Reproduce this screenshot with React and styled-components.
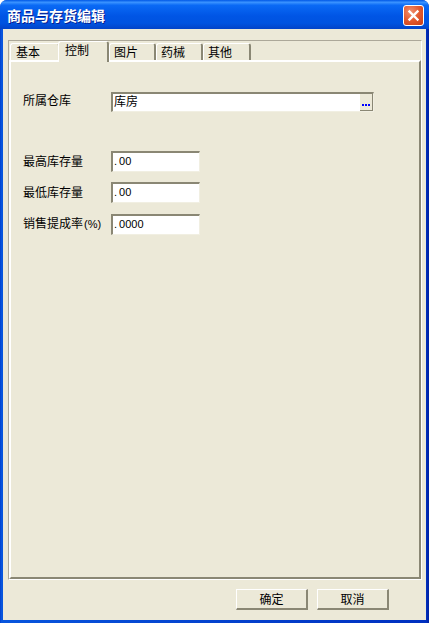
import React from 'react';
import styled, { createGlobalStyle } from 'styled-components';

const GlobalStyle = createGlobalStyle`
    html, body {
        margin: 0;
        padding: 0;
        background: #fff;
    }
    * {
        box-sizing: border-box;
    }
`;

const cjk = `"Noto Sans CJK SC", "Liberation Sans", sans-serif`;

const Window = styled.div`
    width: 429px;
    height: 623px;
    display: flex;
    flex-direction: column;
    font-family: ${cjk};
    font-size: 12px;
    line-height: 14px;
    color: #000;
    background: linear-gradient(90deg, #0038c8 0, #0855dd 1px, #0855dd 3px, #0030c0 426px, #0020a0 429px);
    border-radius: 7px 7px 0 0;
    overflow: hidden;
`;

const TitleBar = styled.div`
    height: 29px;
    flex: none;
    display: flex;
    justify-content: space-between;
    padding: 5px 5px 0 7px;
    background: linear-gradient(180deg, #0058e6 0%, #3a93ff 8%, #0a6af5 18%, #0055e5 55%, #0053e0 80%, #0243c8 100%);
`;

const Title = styled.div`
    color: #fff;
    font-size: 14px;
    font-weight: 700;
    line-height: 20px;
    text-shadow: 1px 1px 0 #0a1f8f;
`;

const CloseButton = styled.div`
    width: 21px;
    height: 21px;
    display: flex;
    align-items: center;
    justify-content: center;
    border: 1px solid #fff;
    border-radius: 3px;
    background: radial-gradient(circle at 35% 30%, #f09070 0%, #e2592f 50%, #c83c14 100%);
`;

const Frame = styled.div`
    flex: 1;
    display: flex;
    flex-direction: column;
    min-height: 0;
    margin: 0 3px 3px;
    padding: 11px 4px 0 5px;
    background: #ece9d8;
`;

const TabBox = styled.div`
    height: 540px;
    flex: none;
    display: flex;
    flex-direction: column;
    border: 1px solid #aca899;
    border-right-color: #fff;
    border-bottom-color: #fff;
`;

const TabStrip = styled.div`
    height: 19px;
    flex: none;
    display: flex;
    align-items: flex-end;
    padding-left: 1px;
`;

const Tab = styled.div`
    width: ${p => p.$width}px;
    height: ${p => (p.$active ? 21 : 17)}px;
    display: flex;
    align-items: center;
    padding-left: ${p => p.$inset}px;
    padding-bottom: ${p => (p.$active ? 4 : 0)}px;
    background: #ece9d8;
    border-top: 1px solid #fff;
    border-left: 1px solid #fff;
    border-right: 2px solid #8a8774;
    border-radius: 3px 3px 0 0;
    margin-left: ${p => (p.$active ? -2 : 0)}px;
    margin-bottom: ${p => (p.$active ? -2 : 0)}px;
    position: relative;
    z-index: ${p => (p.$active ? 1 : 0)};
`;

const TabPanel = styled.div`
    flex: 1;
    min-height: 0;
    display: flex;
    flex-direction: column;
    padding: 30px 12px 0 12px;
    border-top: 2px solid #fff;
    border-left: 2px solid #fff;
    border-right: 2px solid #8a8774;
    border-bottom: 2px solid #8a8774;
    background: #ece9d8;
`;

const WarehouseRow = styled.div`
    display: flex;
    align-items: center;
    height: 20px;
    margin-bottom: 39px;
`;

const FieldRow = styled.div`
    display: flex;
    align-items: center;
    height: 21px;
    margin-bottom: ${p => p.$gap}px;
`;

const Label = styled.div`
    width: 88px;
    flex: none;
    padding-bottom: ${p => p.$lift}px;
    white-space: nowrap;
`;

const Percent = styled.span`
    font-family: "Liberation Sans", sans-serif;
    font-size: 11px;
    margin-left: 1px;
`;

const Input = styled.div`
    width: ${p => p.$width}px;
    height: ${p => p.$height}px;
    display: flex;
    align-items: stretch;
    justify-content: space-between;
    padding-left: 1px;
    background: #fff;
    border-top: 2px solid #8a8774;
    border-left: 2px solid #8a8774;
    border-right: 1px solid #f1efe2;
    border-bottom: 1px solid #f1efe2;
`;

const InputText = styled.span`
    align-self: center;
    padding-bottom: 3px;
`;

const NumberText = styled.span`
    align-self: center;
    padding-bottom: 2px;
    font-family: "Liberation Sans", sans-serif;
    font-size: 11px;
`;

const Point = styled.span`
    margin-right: 2px;
`;

const Ellipsis = styled.div`
    width: 13px;
    background: #ece9d8;
    border-right: 1px solid #8a8774;
    border-bottom: 1px solid #8a8774;
    display: flex;
    align-items: flex-end;
    justify-content: center;
    gap: 1px;
    padding-bottom: 4px;
`;

const Dot = styled.span`
    width: 2px;
    height: 2px;
    background: #0000ff;
`;

const Footer = styled.div`
    flex: 1;
    display: flex;
    align-items: flex-start;
    justify-content: flex-end;
    gap: 9px;
    padding: 9px 33px 0 0;
`;

const Button = styled.div`
    width: 72px;
    height: 21px;
    display: flex;
    align-items: center;
    justify-content: center;
    padding-bottom: 1px;
    background: #ece9d8;
    border-top: 1px solid #fff;
    border-left: 1px solid #fff;
    border-right: 2px solid #8a8774;
    border-bottom: 2px solid #8a8774;
`;

const tabs = [
    { text: '基本', width: 50, inset: 5 },
    { text: '控制', width: 51, inset: 6, active: true },
    { text: '图片', width: 47, inset: 4 },
    { text: '药械', width: 47, inset: 4 },
    { text: '其他', width: 48, inset: 4 },
];

const fields = [
    { label: '最高库存量', value: '00', gap: 10 },
    { label: '最低库存量', value: '00', gap: 11 },
    { label: '销售提成率', unit: '(%)', value: '0000', gap: 0 },
];

const App = () => (
    <>
        <GlobalStyle />
        <Window>
            <TitleBar>
                <Title>商品与存货编辑</Title>
                <CloseButton>
                    <svg width="13" height="13" viewBox="0 0 13 13">
                        <path d="M2.5 2.5 L10.5 10.5 M10.5 2.5 L2.5 10.5" stroke="#fff" strokeWidth="2.4" strokeLinecap="square" />
                    </svg>
                </CloseButton>
            </TitleBar>
            <Frame>
                <TabBox>
                    <TabStrip>
                        {tabs.map(t => (
                            <Tab key={t.text} $width={t.width} $inset={t.inset} $active={t.active}>{t.text}</Tab>
                        ))}
                    </TabStrip>
                    <TabPanel>
                        <WarehouseRow>
                            <Label $lift={5}>所属仓库</Label>
                            <Input $width={263} $height={20}>
                                <InputText>库房</InputText>
                                <Ellipsis><Dot /><Dot /><Dot /></Ellipsis>
                            </Input>
                        </WarehouseRow>
                        {fields.map(f => (
                            <FieldRow key={f.label} $gap={f.gap}>
                                <Label $lift={2}>
                                    {f.label}
                                    {f.unit && <Percent>{f.unit}</Percent>}
                                </Label>
                                <Input $width={89} $height={21}>
                                    <NumberText><Point>.</Point>{f.value}</NumberText>
                                </Input>
                            </FieldRow>
                        ))}
                    </TabPanel>
                </TabBox>
                <Footer>
                    <Button>确定</Button>
                    <Button>取消</Button>
                </Footer>
            </Frame>
        </Window>
    </>
);

export default App;
